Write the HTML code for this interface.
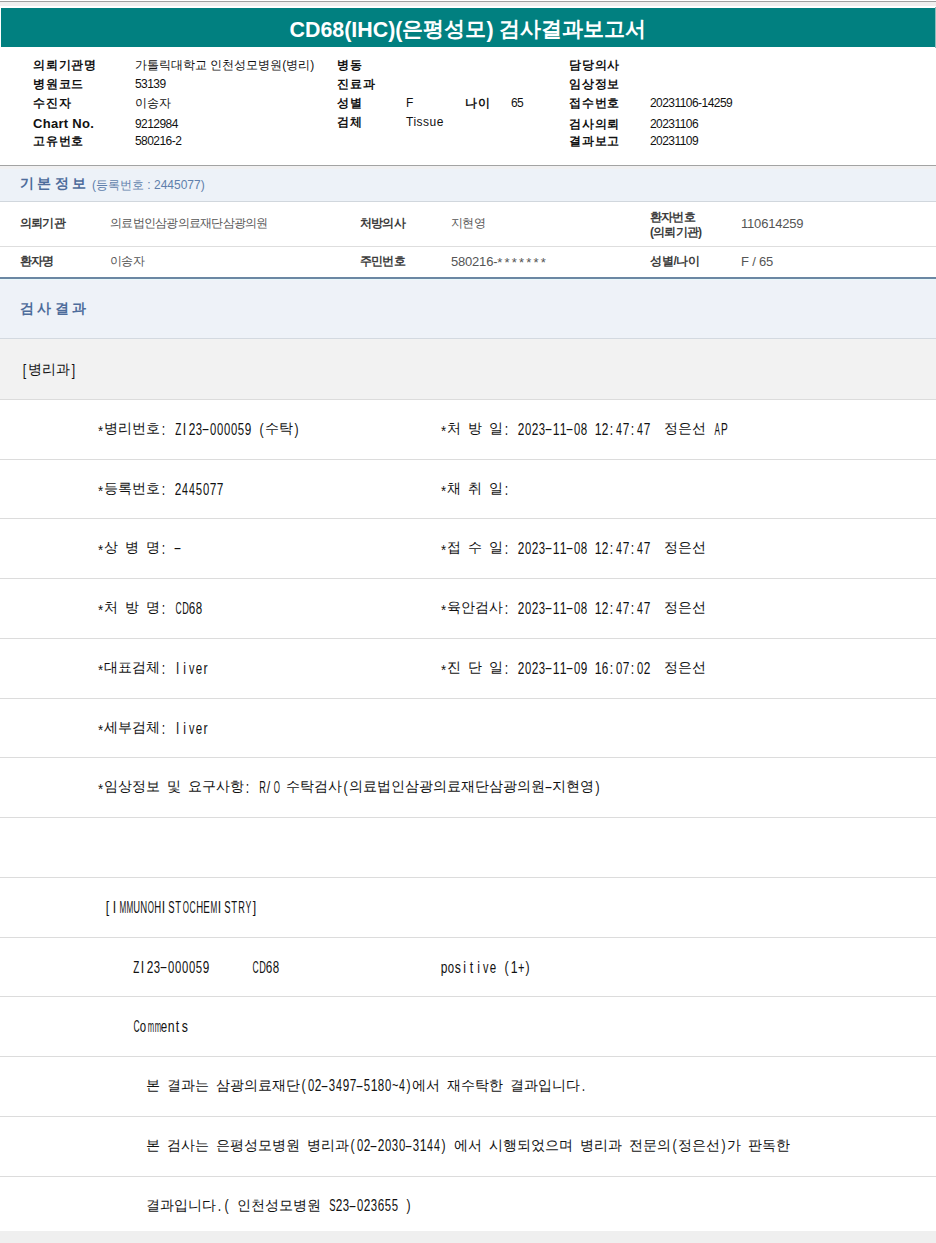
<!DOCTYPE html><html lang="ko"><head><meta charset="utf-8"><style>
html,body{margin:0;padding:0;background:#fff;width:936px;height:1243px;overflow:hidden;position:relative}
body{font-family:"Liberation Sans",sans-serif}
.r{position:absolute}
div{position:absolute;white-space:nowrap}
.m{font-family:"Liberation Sans",sans-serif;color:#111;height:16px;line-height:16px}
.m .k{font-size:14px;letter-spacing:0;position:relative;top:1px}
.m i{display:inline-block;width:7px;text-align:center;font-style:normal;font-family:"Liberation Sans",sans-serif;font-size:15px}
.m i.ast{font-size:14px;position:relative;top:4px;transform:scaleX(.95)}
.m i.dash{transform:translateY(2px) scaleX(1.6)}
.lt{position:relative;top:1px}
.ttl{left:0;width:936px;text-align:center;color:#fff;font-weight:bold;font-size:21.4px;line-height:24px}
.lb{font-weight:bold;font-size:12px;color:#111;line-height:14px;letter-spacing:0.8px}
.vd{letter-spacing:-0.55px}
.cn{font-size:13px;letter-spacing:0.3px}
.vl{font-size:12px;color:#111;line-height:14px}
.sl{font-weight:bold;font-size:12px;color:#3c3c3c;line-height:14px;letter-spacing:-0.8px}
.sv{font-size:12px;color:#555;line-height:14px;letter-spacing:-0.75px}
.svd{font-size:13px;letter-spacing:-0.2px}
.ast2{letter-spacing:2.2px;position:relative;top:1px}
.st{font-weight:bold;font-size:14px;color:#4d6c9b;line-height:16px;letter-spacing:3.4px}
.ss{font-size:12px;color:#5f7fab;line-height:14px}
.m i.s82{transform:translateY(2px) scale(0.82,1.1)}.m i.s66{transform:translateY(2px) scale(0.66,1.1)}.m i.s79{transform:translateY(2px) scale(0.79,1.1)}.m i.s76{transform:translateY(2px) scale(0.76,1.1)}.m i.s75{transform:translateY(2px) scale(0.75,1.1)}.m i.s78{transform:translateY(2px) scale(0.78,1.1)}.m i.s77{transform:translateY(2px) scale(0.77,1.1)}.m i.s71{transform:translateY(2px) scale(0.71,1.1)}.m i.s54{transform:translateY(2px) scale(0.54,1.1)}.m i.s68{transform:translateY(2px) scale(0.68,1.1)}.m i.s56{transform:translateY(2px) scale(0.57,1.1)}.m i.s61{transform:translateY(2px) scale(0.61,1.1)}.m i.s73{transform:translateY(2px) scale(0.73,1.1)}.m i.s53{transform:translateY(2px) scale(0.53,1.1)}.m i.s63{transform:translateY(2px) scale(0.63,1.1)}.m i.s64{transform:translateY(2px) scale(0.64,1.1)}.m i.s57{transform:translateY(2px) scale(0.58,1.1)}.m i.s80{transform:translateY(2px) scale(0.8,1.1)}.m i.s74{transform:translateY(2px) scale(0.74,1.1)}.m i.s51{transform:translateY(2px) scale(0.51,1.1)}</style></head><body><div class="r" style="left:0px;top:1px;width:936px;height:1px;background:#a0a0a0"></div>
<div class="r" style="left:0px;top:2px;width:936px;height:4px;background:#efefef"></div>
<div class="r" style="left:1px;top:8px;width:934px;height:39px;background:#018080"></div>
<div class="r" style="left:935px;top:7px;width:1px;height:41px;background:#8cbdbd"></div>
<div class="ttl" style="left:0;top:17px"><span class="lt">CD68(IHC)(</span>은평성모<span class="lt">)</span> 검사결과보고서</div>
<div class="lb" style="left:33px;top:58px;">의뢰기관명</div>
<div class="vl" style="left:135px;top:58px;">가톨릭대학교 인천성모병원(병리)</div>
<div class="lb" style="left:33px;top:77px;">병원코드</div>
<div class="vl vd" style="left:135px;top:77px;">53139</div>
<div class="lb" style="left:33px;top:96px;">수진자</div>
<div class="vl" style="left:135px;top:96px;">이송자</div>
<div class="lb cn" style="left:33px;top:117px;">Chart No.</div>
<div class="vl vd" style="left:135px;top:117px;">9212984</div>
<div class="lb" style="left:33px;top:134px;">고유번호</div>
<div class="vl vd" style="left:135px;top:134px;">580216-2</div>
<div class="lb" style="left:337px;top:58px;">병동</div>
<div class="vl" style="left:406px;top:58px;"></div>
<div class="lb" style="left:337px;top:77px;">진료과</div>
<div class="vl" style="left:406px;top:77px;"></div>
<div class="lb" style="left:337px;top:96px;">성별</div>
<div class="vl" style="left:406px;top:96px;">F</div>
<div class="lb" style="left:337px;top:115px;">검체</div>
<div class="vl" style="left:406px;top:115px;letter-spacing:0.5px">Tissue</div>
<div class="lb" style="left:465px;top:96px;">나이</div>
<div class="vl vd" style="left:511px;top:96px;">65</div>
<div class="lb" style="left:569px;top:58px;">담당의사</div>
<div class="vl vd" style="left:650px;top:58px;"></div>
<div class="lb" style="left:569px;top:77px;">임상정보</div>
<div class="vl vd" style="left:650px;top:77px;"></div>
<div class="lb" style="left:569px;top:96px;">접수번호</div>
<div class="vl vd" style="left:650px;top:96px;">20231106-14259</div>
<div class="lb" style="left:569px;top:117px;">검사의뢰</div>
<div class="vl vd" style="left:650px;top:117px;">20231106</div>
<div class="lb" style="left:569px;top:134px;">결과보고</div>
<div class="vl vd" style="left:650px;top:134px;">20231109</div>
<div class="r" style="left:0px;top:165px;width:936px;height:1px;background:#a3a3a3"></div>
<div class="r" style="left:0px;top:166px;width:936px;height:35px;background:#edf2f8"></div>
<div class="r" style="left:0px;top:166px;width:936px;height:3px;background:#f0f0f1"></div>
<div class="r" style="left:0px;top:201px;width:936px;height:1px;background:#d1d7dd"></div>
<div class="st" style="left:20px;top:175px;">기본정보</div>
<div class="ss" style="left:92px;top:178px;">(등록번호 : 2445077)</div>
<div class="sl" style="left:20px;top:216px;">의뢰기관</div>
<div class="sv" style="left:110px;top:216px;">의료법인삼광의료재단삼광의원</div>
<div class="sl" style="left:360px;top:216px;">처방의사</div>
<div class="sv" style="left:451px;top:216px;">지현영</div>
<div class="sl" style="left:650px;top:210px;">환자번호</div>
<div class="sl" style="left:650px;top:225px;">(의뢰기관)</div>
<div class="sv svd" style="left:741px;top:217px;">110614259</div>
<div class="r" style="left:0px;top:246px;width:936px;height:1px;background:#dedede"></div>
<div class="sl" style="left:20px;top:254px;">환자명</div>
<div class="sv" style="left:110px;top:254px;">이송자</div>
<div class="sl" style="left:360px;top:254px;">주민번호</div>
<div class="sv svd" style="left:451px;top:255px">580216-<span class="ast2">*******</span></div>
<div class="sl" style="left:650px;top:254px;letter-spacing:-0.3px">성별/나이</div>
<div class="sv svd" style="left:741px;top:255px;">F / 65</div>
<div class="r" style="left:0px;top:277px;width:936px;height:2px;background:#6b87a3"></div>
<div class="r" style="left:0px;top:279px;width:936px;height:59px;background:#eef2f8"></div>
<div class="r" style="left:0px;top:279px;width:936px;height:1px;background:#e9f7fa"></div>
<div class="r" style="left:0px;top:338px;width:936px;height:1px;background:#d3d9e0"></div>
<div class="st" style="left:20px;top:300px;">검사결과</div>
<div class="r" style="left:0px;top:339px;width:936px;height:60px;background:#f2f2f2"></div>
<div class="r" style="left:0px;top:399px;width:936px;height:1px;background:#dcdcdc"></div>
<div class="m" style="left:21px;top:360px"><i class="s82">[</i><span class="k">병리과</span><i class="s82">]</i></div>
<div class="r" style="left:0px;top:459px;width:936px;height:1px;background:#dcdcdc"></div>
<div class="r" style="left:0px;top:518px;width:936px;height:1px;background:#dcdcdc"></div>
<div class="r" style="left:0px;top:578px;width:936px;height:1px;background:#dcdcdc"></div>
<div class="r" style="left:0px;top:638px;width:936px;height:1px;background:#dcdcdc"></div>
<div class="r" style="left:0px;top:698px;width:936px;height:1px;background:#dcdcdc"></div>
<div class="r" style="left:0px;top:757px;width:936px;height:1px;background:#dcdcdc"></div>
<div class="r" style="left:0px;top:817px;width:936px;height:1px;background:#dcdcdc"></div>
<div class="r" style="left:0px;top:877px;width:936px;height:1px;background:#dcdcdc"></div>
<div class="r" style="left:0px;top:937px;width:936px;height:1px;background:#dcdcdc"></div>
<div class="r" style="left:0px;top:996px;width:936px;height:1px;background:#dcdcdc"></div>
<div class="r" style="left:0px;top:1056px;width:936px;height:1px;background:#dcdcdc"></div>
<div class="r" style="left:0px;top:1116px;width:936px;height:1px;background:#dcdcdc"></div>
<div class="r" style="left:0px;top:1176px;width:936px;height:1px;background:#dcdcdc"></div>
<div class="r" style="left:0px;top:1231px;width:936px;height:12px;background:#efefef"></div>
<div class="m" style="left:97px;top:419px"><i class="ast">*</i><span class="k">병리번호</span><i class="s82">:</i><i>&nbsp;</i><i class="s66">Z</i><i class="s82">I</i><i class="s79">2</i><i class="s76">3</i><i class="dash">-</i><i class="s75">0</i><i class="s75">0</i><i class="s75">0</i><i class="s75">0</i><i class="s76">5</i><i class="s78">9</i><i>&nbsp;</i><i class="s82">(</i><span class="k">수탁</span><i class="s82">)</i></div>
<div class="m" style="left:440px;top:419px"><i class="ast">*</i><span class="k">처</span><i>&nbsp;</i><span class="k">방</span><i>&nbsp;</i><span class="k">일</span><i class="s82">:</i><i>&nbsp;</i><i class="s79">2</i><i class="s75">0</i><i class="s79">2</i><i class="s76">3</i><i class="dash">-</i><i class="s82">1</i><i class="s82">1</i><i class="dash">-</i><i class="s75">0</i><i class="s77">8</i><i>&nbsp;</i><i class="s82">1</i><i class="s79">2</i><i class="s82">:</i><i class="s71">4</i><i class="s79">7</i><i class="s82">:</i><i class="s71">4</i><i class="s79">7</i><i>&nbsp;</i><i>&nbsp;</i><span class="k">정은선</span><i>&nbsp;</i><i class="s54">A</i><i class="s68">P</i></div>
<div class="m" style="left:97px;top:479px"><i class="ast">*</i><span class="k">등록번호</span><i class="s82">:</i><i>&nbsp;</i><i class="s79">2</i><i class="s71">4</i><i class="s71">4</i><i class="s76">5</i><i class="s75">0</i><i class="s79">7</i><i class="s79">7</i></div>
<div class="m" style="left:440px;top:479px"><i class="ast">*</i><span class="k">채</span><i>&nbsp;</i><span class="k">취</span><i>&nbsp;</i><span class="k">일</span><i class="s82">:</i></div>
<div class="m" style="left:97px;top:538px"><i class="ast">*</i><span class="k">상</span><i>&nbsp;</i><span class="k">병</span><i>&nbsp;</i><span class="k">명</span><i class="s82">:</i><i>&nbsp;</i><i class="dash">-</i></div>
<div class="m" style="left:440px;top:538px"><i class="ast">*</i><span class="k">접</span><i>&nbsp;</i><span class="k">수</span><i>&nbsp;</i><span class="k">일</span><i class="s82">:</i><i>&nbsp;</i><i class="s79">2</i><i class="s75">0</i><i class="s79">2</i><i class="s76">3</i><i class="dash">-</i><i class="s82">1</i><i class="s82">1</i><i class="dash">-</i><i class="s75">0</i><i class="s77">8</i><i>&nbsp;</i><i class="s82">1</i><i class="s79">2</i><i class="s82">:</i><i class="s71">4</i><i class="s79">7</i><i class="s82">:</i><i class="s71">4</i><i class="s79">7</i><i>&nbsp;</i><i>&nbsp;</i><span class="k">정은선</span></div>
<div class="m" style="left:97px;top:598px"><i class="ast">*</i><span class="k">처</span><i>&nbsp;</i><span class="k">방</span><i>&nbsp;</i><span class="k">명</span><i class="s82">:</i><i>&nbsp;</i><i class="s56">C</i><i class="s61">D</i><i class="s78">6</i><i class="s77">8</i></div>
<div class="m" style="left:440px;top:598px"><i class="ast">*</i><span class="k">육안검사</span><i class="s82">:</i><i>&nbsp;</i><i class="s79">2</i><i class="s75">0</i><i class="s79">2</i><i class="s76">3</i><i class="dash">-</i><i class="s82">1</i><i class="s82">1</i><i class="dash">-</i><i class="s75">0</i><i class="s77">8</i><i>&nbsp;</i><i class="s82">1</i><i class="s79">2</i><i class="s82">:</i><i class="s71">4</i><i class="s79">7</i><i class="s82">:</i><i class="s71">4</i><i class="s79">7</i><i>&nbsp;</i><i>&nbsp;</i><span class="k">정은선</span></div>
<div class="m" style="left:97px;top:658px"><i class="ast">*</i><span class="k">대표검체</span><i class="s82">:</i><i>&nbsp;</i><i class="s82">l</i><i class="s82">i</i><i class="s73">v</i><i class="s77">e</i><i class="s82">r</i></div>
<div class="m" style="left:440px;top:658px"><i class="ast">*</i><span class="k">진</span><i>&nbsp;</i><span class="k">단</span><i>&nbsp;</i><span class="k">일</span><i class="s82">:</i><i>&nbsp;</i><i class="s79">2</i><i class="s75">0</i><i class="s79">2</i><i class="s76">3</i><i class="dash">-</i><i class="s82">1</i><i class="s82">1</i><i class="dash">-</i><i class="s75">0</i><i class="s78">9</i><i>&nbsp;</i><i class="s82">1</i><i class="s78">6</i><i class="s82">:</i><i class="s75">0</i><i class="s79">7</i><i class="s82">:</i><i class="s75">0</i><i class="s79">2</i><i>&nbsp;</i><i>&nbsp;</i><span class="k">정은선</span></div>
<div class="m" style="left:97px;top:718px"><i class="ast">*</i><span class="k">세부검체</span><i class="s82">:</i><i>&nbsp;</i><i class="s82">l</i><i class="s82">i</i><i class="s73">v</i><i class="s77">e</i><i class="s82">r</i></div>
<div class="m" style="left:97px;top:777px"><i class="ast">*</i><span class="k">임상정보</span><i>&nbsp;</i><span class="k">및</span><i>&nbsp;</i><span class="k">요구사항</span><i class="s82">:</i><i>&nbsp;</i><i class="s61">R</i><i class="s82">/</i><i class="s53">O</i><i>&nbsp;</i><span class="k">수탁검사</span><i class="s82">(</i><span class="k">의료법인삼광의료재단삼광의원</span><i class="dash">-</i><span class="k">지현영</span><i class="s82">)</i></div>
<div class="m" style="left:104px;top:897px"><i class="s82">[</i><i class="s82">I</i><i class="s54">M</i><i class="s54">M</i><i class="s63">U</i><i class="s64">N</i><i class="s53">O</i><i class="s64">H</i><i class="s82">I</i><i class="s63">S</i><i class="s64">T</i><i class="s53">O</i><i class="s56">C</i><i class="s64">H</i><i class="s66">E</i><i class="s54">M</i><i class="s82">I</i><i class="s63">S</i><i class="s64">T</i><i class="s61">R</i><i class="s57">Y</i><i class="s82">]</i></div>
<div class="m" style="left:132px;top:957px"><i class="s66">Z</i><i class="s82">I</i><i class="s79">2</i><i class="s76">3</i><i class="dash">-</i><i class="s75">0</i><i class="s75">0</i><i class="s75">0</i><i class="s75">0</i><i class="s76">5</i><i class="s78">9</i><i>&nbsp;</i><i>&nbsp;</i><i>&nbsp;</i><i>&nbsp;</i><i>&nbsp;</i><i>&nbsp;</i><i class="s56">C</i><i class="s61">D</i><i class="s78">6</i><i class="s77">8</i><i>&nbsp;</i><i>&nbsp;</i><i>&nbsp;</i><i>&nbsp;</i><i>&nbsp;</i><i>&nbsp;</i><i>&nbsp;</i><i>&nbsp;</i><i>&nbsp;</i><i>&nbsp;</i><i>&nbsp;</i><i>&nbsp;</i><i>&nbsp;</i><i>&nbsp;</i><i>&nbsp;</i><i>&nbsp;</i><i>&nbsp;</i><i>&nbsp;</i><i>&nbsp;</i><i>&nbsp;</i><i>&nbsp;</i><i>&nbsp;</i><i>&nbsp;</i><i class="s80">p</i><i class="s76">o</i><i class="s82">s</i><i class="s82">i</i><i class="s82">t</i><i class="s82">i</i><i class="s73">v</i><i class="s77">e</i><i>&nbsp;</i><i class="s82">(</i><i class="s82">1</i><i class="s74">+</i><i class="s82">)</i></div>
<div class="m" style="left:132px;top:1016px"><i class="s56">C</i><i class="s76">o</i><i class="s51">m</i><i class="s51">m</i><i class="s77">e</i><i class="s82">n</i><i class="s82">t</i><i class="s82">s</i></div>
<div class="m" style="left:146px;top:1076px"><span class="k">본</span><i>&nbsp;</i><span class="k">결과는</span><i>&nbsp;</i><span class="k">삼광의료재단</span><i class="s82">(</i><i class="s75">0</i><i class="s79">2</i><i class="dash">-</i><i class="s76">3</i><i class="s71">4</i><i class="s78">9</i><i class="s79">7</i><i class="dash">-</i><i class="s76">5</i><i class="s82">1</i><i class="s77">8</i><i class="s75">0</i><i class="s73">~</i><i class="s71">4</i><i class="s82">)</i><span class="k">에서</span><i>&nbsp;</i><span class="k">재수탁한</span><i>&nbsp;</i><span class="k">결과입니다</span><i class="s82">.</i></div>
<div class="m" style="left:146px;top:1136px"><span class="k">본</span><i>&nbsp;</i><span class="k">검사는</span><i>&nbsp;</i><span class="k">은평성모병원</span><i>&nbsp;</i><span class="k">병리과</span><i class="s82">(</i><i class="s75">0</i><i class="s79">2</i><i class="dash">-</i><i class="s79">2</i><i class="s75">0</i><i class="s76">3</i><i class="s75">0</i><i class="dash">-</i><i class="s76">3</i><i class="s82">1</i><i class="s71">4</i><i class="s71">4</i><i class="s82">)</i><i>&nbsp;</i><span class="k">에서</span><i>&nbsp;</i><span class="k">시행되었으며</span><i>&nbsp;</i><span class="k">병리과</span><i>&nbsp;</i><span class="k">전문의</span><i class="s82">(</i><span class="k">정은선</span><i class="s82">)</i><span class="k">가</span><i>&nbsp;</i><span class="k">판독한</span></div>
<div class="m" style="left:146px;top:1196px"><span class="k">결과입니다</span><i class="s82">.</i><i class="s82">(</i><i>&nbsp;</i><span class="k">인천성모병원</span><i>&nbsp;</i><i class="s63">S</i><i class="s79">2</i><i class="s76">3</i><i class="dash">-</i><i class="s75">0</i><i class="s79">2</i><i class="s76">3</i><i class="s78">6</i><i class="s76">5</i><i class="s76">5</i><i>&nbsp;</i><i class="s82">)</i></div></body></html>
